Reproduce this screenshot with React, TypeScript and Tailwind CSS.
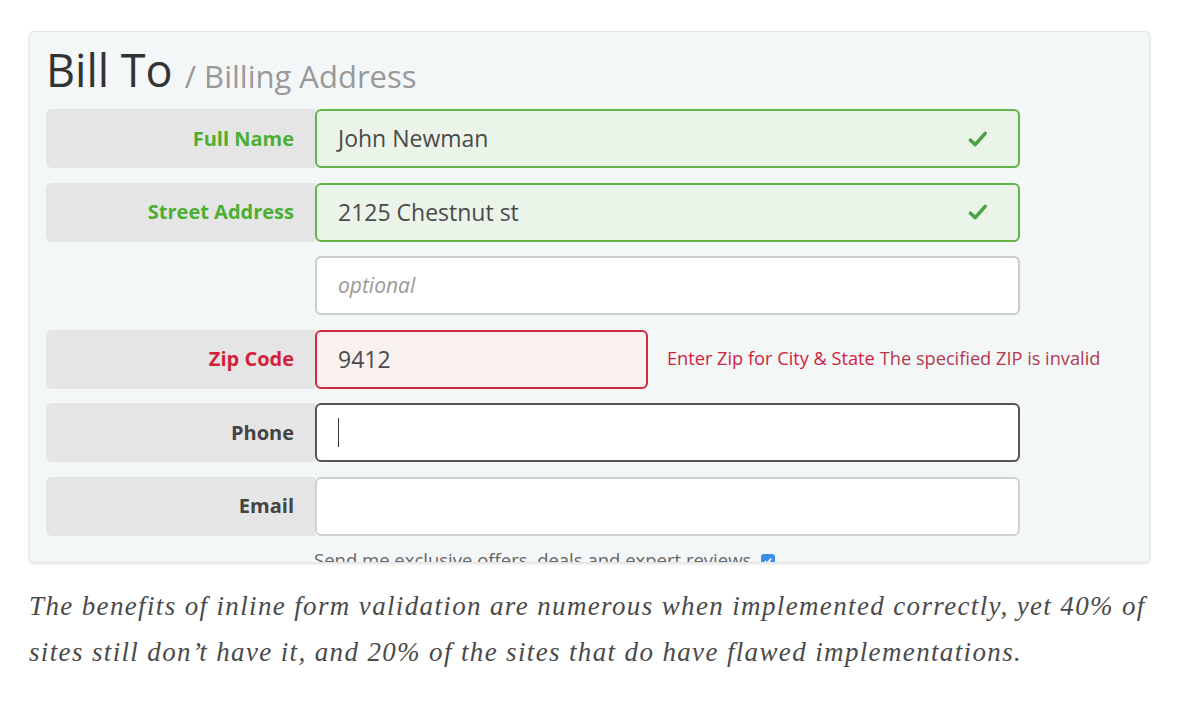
import React from "react";

const sans = { fontFamily: '"Open Sans", "Noto Sans", sans-serif' };

function Check() {
  return (
    <svg width="20" height="18" viewBox="0 0 20 18" className="shrink-0">
      <path
        d="M2.5 10.2 L7.2 14.6 L17.2 3.4"
        fill="none"
        stroke="#4aa345"
        strokeWidth="3.6"
        strokeLinecap="round"
        strokeLinejoin="round"
      />
    </svg>
  );
}

type RowProps = {
  label?: string;
  labelClass?: string;
  inputClass: string;
  value?: string;
  placeholder?: string;
  valid?: boolean;
  caret?: boolean;
  width?: string;
  after?: React.ReactNode;
};

function Row({ label, labelClass, inputClass, value, placeholder, valid, caret, width = "w-[705px]", after }: RowProps) {
  return (
    <div className="flex h-[59px] items-stretch">
      <div
        className={
          "flex w-[269px] shrink-0 items-center justify-end rounded-l-[6px] pr-[21px] text-[20px] font-bold " +
          (label ? "bg-[#e5e5e5] " : "") +
          (labelClass || "")
        }
      >
        {label}
      </div>
      <div
        className={
          "flex items-center rounded-[6px] border-2 pl-[21px] pr-[30px] text-[23px] text-[#4a4a4a] " +
          width +
          " " +
          inputClass
        }
      >
        {caret && <span className="h-[29px] w-px bg-[#333]" />}
        {value && <span className="flex-1">{value}</span>}
        {placeholder && <span className="flex-1 text-[21px] italic text-[#9a9a9a]">{placeholder}</span>}
        {valid && <Check />}
      </div>
      {after}
    </div>
  );
}

export default function App() {
  return (
    <div className="min-h-[702px] w-[1180px] bg-white pl-[29px] pt-[31px]" style={sans}>
      <div className="h-[532px] w-[1121px] overflow-hidden rounded-[5px] border border-[#e3e6e8] bg-[#f4f7f8] pl-[16px] shadow-[0_1px_3px_rgba(0,0,0,0.12)]">
        <div className="flex h-[77px] items-end pb-[17px]">
          <span className="text-[45px] leading-none text-[#333]">Bill To</span>
          <span className="ml-[12px] text-[31px] leading-none text-[#999]">/ Billing Address</span>
        </div>
        <div className="flex flex-col gap-[14.5px]">
          <Row
            label="Full Name"
            labelClass="text-[#4caf32]"
            inputClass="border-[#66b34c] bg-[#ebf4e9]"
            value="John Newman"
            valid
          />
          <Row
            label="Street Address"
            labelClass="text-[#4caf32]"
            inputClass="border-[#66b34c] bg-[#ebf4e9]"
            value="2125 Chestnut st"
            valid
          />
          <Row inputClass="border-[#cdcdcd] bg-white" placeholder="optional" />
          <Row
            label="Zip Code"
            labelClass="text-[#d41f3a]"
            inputClass="border-[#cf2a42] bg-[#f8f1ef]"
            value="9412"
            width="w-[333px]"
            after={
              <div className="flex items-center pl-[19px] text-[18.2px]">
                <span className="text-[#d3213d]">Enter Zip for City &amp; State</span>
                <span className="ml-[5px] text-[#b23a4c]">The specified ZIP is invalid</span>
              </div>
            }
          />
          <Row label="Phone" labelClass="text-[#444]" inputClass="border-[#555] bg-white" caret />
          <Row label="Email" labelClass="text-[#444]" inputClass="border-[#d0d0d0] bg-white" />
        </div>
        <div className="flex items-center pl-[268px] pt-[10px] text-[18.5px] text-[#666]">
          <span>Send me exclusive offers, deals and expert reviews</span>
          <span className="ml-[10px] mt-[4px] flex h-[14px] w-[14px] items-center justify-center rounded-[3px] bg-[#3b8fe6]">
            <svg width="10" height="10" viewBox="0 0 10 10">
              <path d="M2 5.2 L4.2 7.4 L8.2 2.6" fill="none" stroke="white" strokeWidth="1.8" />
            </svg>
          </span>
        </div>
      </div>
      <p
        className="mt-[20px] w-[1140px] text-[27px] italic leading-[46px] tracking-[1.36px] text-[#4a4a4a]"
        style={{ fontFamily: '"Liberation Serif", "DejaVu Serif", serif' }}
      >
        The benefits of inline form validation are numerous when implemented correctly, yet 40% of sites still
        don’t have it, and 20% of the sites that do have flawed implementations.
      </p>
    </div>
  );
}
